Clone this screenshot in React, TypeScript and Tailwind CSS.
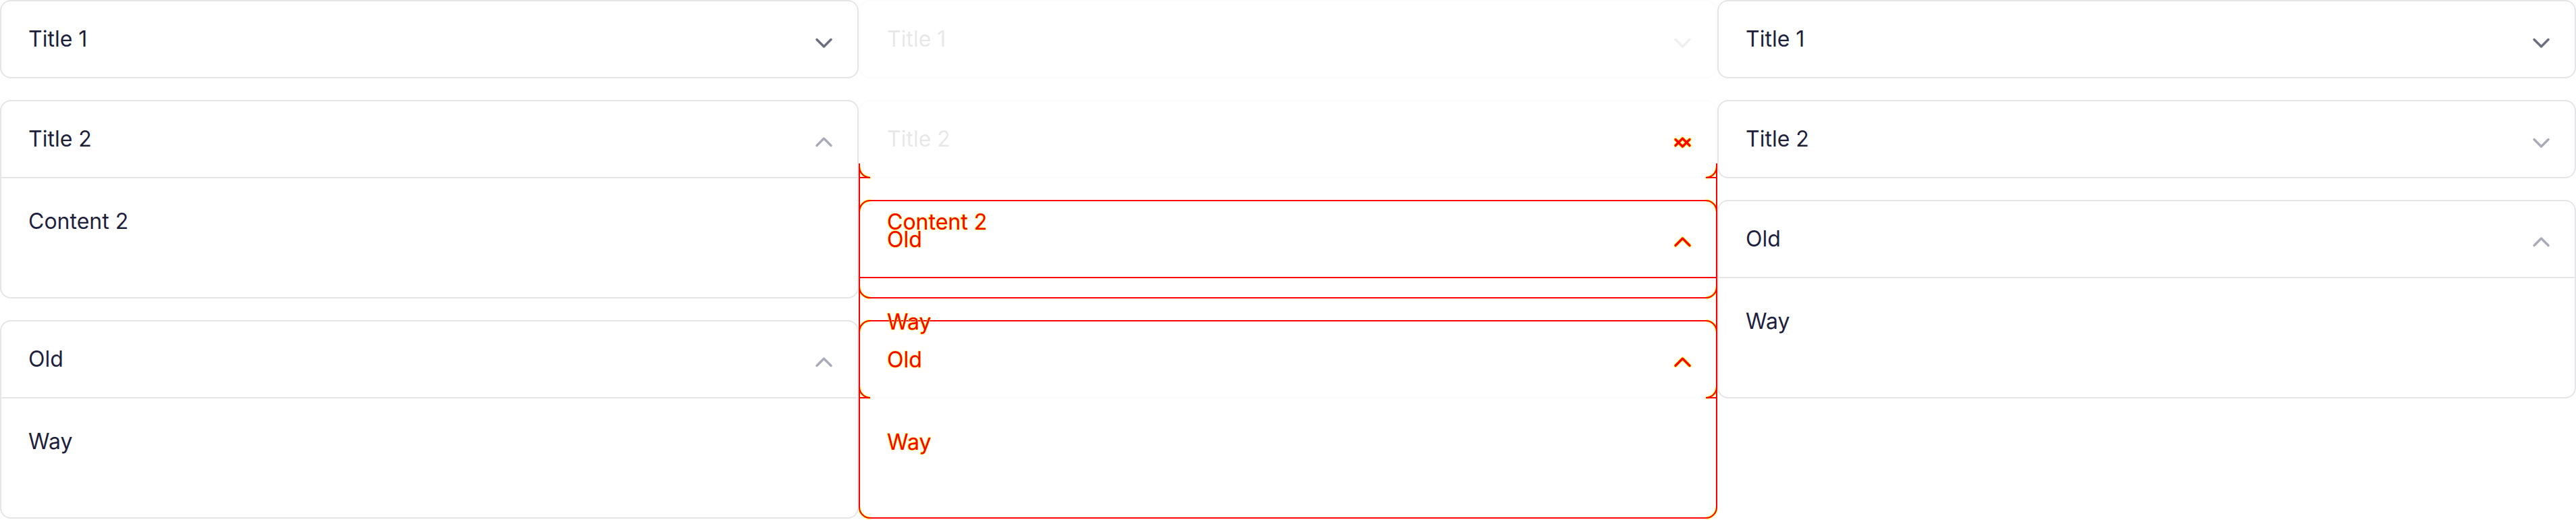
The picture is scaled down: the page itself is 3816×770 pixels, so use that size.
import clsx from 'clsx'

type Entry = { title: string; content?: string; open?: boolean; dimIcon?: boolean }

const expected: Entry[] = [
  { title: 'Title 1' },
  { title: 'Title 2', content: 'Content 2', open: true, dimIcon: true },
  { title: 'Old', content: 'Way', open: true, dimIcon: true },
]

const received: Entry[] = [
  { title: 'Title 1' },
  { title: 'Title 2', content: 'Content 2', dimIcon: true },
  { title: 'Old', content: 'Way', open: true, dimIcon: true },
]

function Chevron({ up, dim }: { up?: boolean; dim?: boolean }) {
  return (
    <svg
      width="28"
      height="28"
      viewBox="0 0 28 28"
      fill="none"
      className={clsx(
        'shrink-0',
        up ? 'translate-y-[6px]' : 'translate-y-[4px]',
        dim ? 'text-[#a9aab9]' : 'text-[#6b6d82]'
      )}
    >
      <path
        d={up ? 'M4 17.5 14.5 7 25 17.5' : 'M4 10.5 14.5 21 25 10.5'}
        stroke="currentColor"
        strokeWidth="3.5"
        strokeLinecap="round"
        strokeLinejoin="round"
      />
    </svg>
  )
}

function Item({ title, content, open, dimIcon }: Entry) {
  return (
    <div className="overflow-hidden rounded-[16px] border-2 border-[#e5e5e8] bg-white">
      <div className="flex h-[112px] items-center justify-between pl-[40px] pr-[36px]">
        <span className="text-[32px] leading-[48px]">{title}</span>
        <Chevron up={open} dim={dimIcon} />
      </div>
      {open && (
        <div className="h-[178px] border-t-2 border-[#e5e5e8] px-[40px] pt-[40px] text-[32px] leading-[48px]">
          {content}
        </div>
      )}
    </div>
  )
}

function Accordion({ items }: { items: Entry[] }) {
  return (
    <div className="flex flex-col gap-[32px]">
      {items.map((it) => (
        <Item key={it.title} {...it} />
      ))}
    </div>
  )
}

// arcs get a yellow anti-alias rim under the red diff stroke
const arcs = [
  'M1 751 A16 16 0 0 0 17 767',
  'M1255 767 A16 16 0 0 0 1271 751',
  'M1 247 A16 16 0 0 0 17 263',
  'M1271 247 A16 16 0 0 1 1255 263',
  'M1 313 A16 16 0 0 1 17 297',
  'M1255 297 A16 16 0 0 1 1271 313',
  'M1 425 A16 16 0 0 0 17 441',
  'M1255 441 A16 16 0 0 0 1271 425',
  'M1 491 A16 16 0 0 1 17 475',
  'M1255 475 A16 16 0 0 1 1271 491',
  'M1 573 A16 16 0 0 0 17 589',
  'M1271 573 A16 16 0 0 1 1255 589',
]

const lines = [
  'M1 242 V751',
  'M1271 242 V751',
  'M17 767 H1255',
  'M1 263 H17',
  'M1255 263 H1271',
  'M17 297 H1255',
  'M1 411 H1271',
  'M17 441 H1255',
  'M17 475 H1255',
  'M1 589 H17',
  'M1255 589 H1271',
]

const chevrons = [
  'M1210 215.5 1220.5 205 1231 215.5',
  'M1210 206.5 1220.5 217 1231 206.5',
  'M1210 363.5 1220.5 353 1231 363.5',
  'M1210 541.5 1220.5 531 1231 541.5',
]

const texts: [string, number][] = [
  ['Content 2', 339.6],
  ['Old', 365.6],
  ['Way', 487.6],
  ['Old', 543.6],
  ['Way', 665.6],
]

function DiffOverlay() {
  return (
    <svg className="absolute inset-0" width="1272" height="770" viewBox="0 0 1272 770" fill="none">
      <g stroke="#ffff00" strokeWidth="3.6">
        {arcs.map((d) => (
          <path key={d} d={d} />
        ))}
      </g>
      {chevrons.map((d) => (
        <path key={d} d={d} stroke="#ffff00" strokeWidth="5" strokeLinecap="round" strokeLinejoin="round" />
      ))}
      <g stroke="#ff0000" strokeWidth="2">
        {arcs.concat(lines).map((d) => (
          <path key={d} d={d} />
        ))}
      </g>
      {chevrons.map((d) => (
        <path key={d + 'r'} d={d} stroke="#ff0000" strokeWidth="3.4" strokeLinecap="round" strokeLinejoin="round" />
      ))}
      {texts.map(([t, y]) => (
        <text
          key={t + y}
          x="42"
          y={y}
          fontSize="32"
          fontFamily="Inter, sans-serif"
          fill="#ff0000"
          stroke="#ffff00"
          strokeWidth="1.2"
          paintOrder="stroke"
        >
          {t}
        </text>
      ))}
    </svg>
  )
}

export default function App() {
  return (
    <div className="flex h-[770px] w-[3816px] overflow-hidden bg-white font-['Inter',sans-serif] text-[#1e1f3d]">
      <div className="w-[1272px]">
        <Accordion items={expected} />
      </div>
      <div className="relative w-[1272px]">
        <div className="opacity-10 grayscale">
          <Accordion items={expected} />
        </div>
        <DiffOverlay />
      </div>
      <div className="w-[1272px]">
        <Accordion items={received} />
      </div>
    </div>
  )
}
